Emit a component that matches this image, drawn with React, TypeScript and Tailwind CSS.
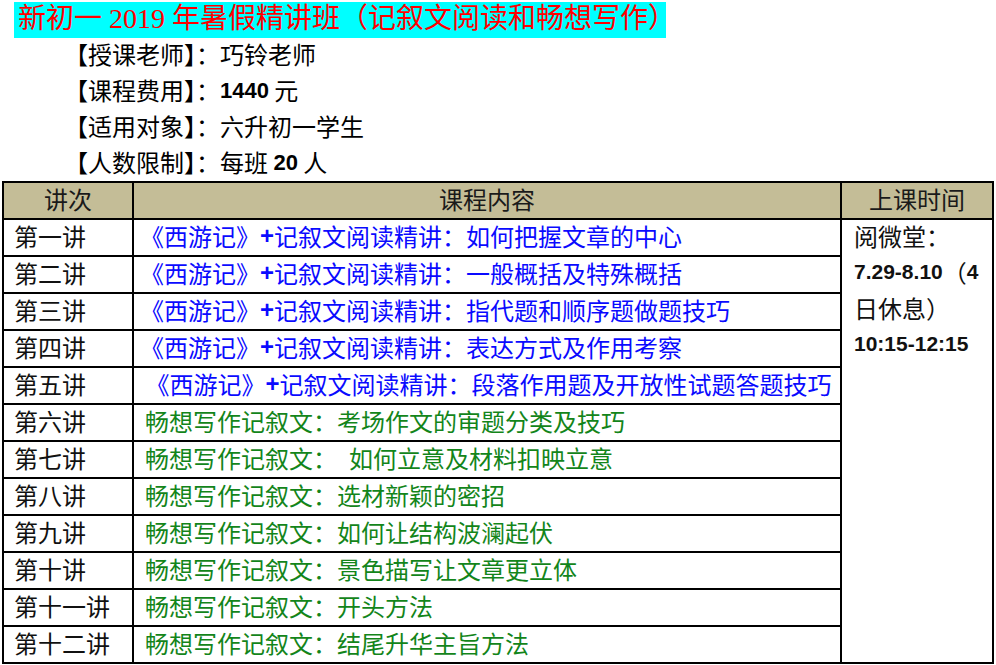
import { FC } from "react";

const cjk = { fontFamily: '"Noto Sans CJK SC", sans-serif' };
const num = { fontFamily: '"Liberation Sans", "Noto Sans CJK SC", sans-serif' };

interface Lesson {
  name: string;
  text: string;
  color: string;
}

const lessons: Lesson[] = [
  { name: "第一讲", text: "《西游记》+记叙文阅读精讲：如何把握文章的中心", color: "blue" },
  { name: "第二讲", text: "《西游记》+记叙文阅读精讲：一般概括及特殊概括", color: "blue" },
  { name: "第三讲", text: "《西游记》+记叙文阅读精讲：指代题和顺序题做题技巧", color: "blue" },
  { name: "第四讲", text: "《西游记》+记叙文阅读精讲：表达方式及作用考察", color: "blue" },
  { name: "第五讲", text: " 《西游记》+记叙文阅读精讲：段落作用题及开放性试题答题技巧", color: "blue" },
  { name: "第六讲", text: "畅想写作记叙文：考场作文的审题分类及技巧", color: "green" },
  { name: "第七讲", text: "畅想写作记叙文：\u3000如何立意及材料扣映立意", color: "green" },
  { name: "第八讲", text: "畅想写作记叙文：选材新颖的密招", color: "green" },
  { name: "第九讲", text: "畅想写作记叙文：如何让结构波澜起伏", color: "green" },
  { name: "第十讲", text: "畅想写作记叙文：景色描写让文章更立体", color: "green" },
  { name: "第十一讲", text: "畅想写作记叙文：开头方法", color: "green" },
  { name: "第十二讲", text: "畅想写作记叙文：结尾升华主旨方法", color: "green" },
];

// 把 "+" 单独加粗，其它照常
const LessonText: FC<{ text: string }> = ({ text }) => {
  const parts = text.split("+");
  if (parts.length < 2) return <>{text}</>;
  return (
    <>
      {parts[0]}
      <span className="font-bold" style={num}>+</span>
      {parts[1]}
    </>
  );
};

const App: FC = () => {
  return (
    <div className="w-[996px] h-[665px] bg-white overflow-hidden" style={cjk}>
      <div className="ml-[14px] mt-[2px] w-[652px] h-[36px] bg-[#00ffff] flex items-center pl-[4px] pb-[2px]">
        <span
          className="text-[#ff0000] text-[28px] leading-none whitespace-pre"
          style={{ fontFamily: '"Liberation Serif", "Noto Sans CJK SC", serif' }}
        >
          新初一 2019 年暑假精讲班（记叙文阅读和畅想写作）
        </span>
      </div>

      <div className="pl-[64px] text-[24px] text-black h-[143px]">
        <div className="h-[36px] flex items-center pb-[4px] whitespace-pre">【授课老师】：巧铃老师</div>
        <div className="h-[36px] flex items-center pb-[4px] whitespace-pre">
          【课程费用】：<span className="font-bold text-[22px]" style={num}>1440</span> 元
        </div>
        <div className="h-[36px] flex items-center pb-[4px] whitespace-pre">【适用对象】：六升初一学生</div>
        <div className="h-[36px] flex items-center pb-[4px] whitespace-pre">
          【人数限制】：每班 <span className="font-bold text-[22px]" style={num}>20</span> 人
        </div>
      </div>

      <div className="ml-[2px] w-[992px] grid grid-cols-[128px_706px_150px] grid-rows-[repeat(13,35px)] gap-[2px] p-[2px] bg-black">
        <div className="bg-[#c4bd97] flex items-center justify-center pb-[3px] text-[24px] text-[#1a1a1a]">讲次</div>
        <div className="bg-[#c4bd97] flex items-center justify-center pb-[3px] text-[24px] text-[#1a1a1a]">课程内容</div>
        <div className="bg-[#c4bd97] flex items-center justify-center pb-[3px] text-[24px] text-[#1a1a1a]">上课时间</div>

        {lessons.map((l, i) => (
          <div key={l.name} className="contents">
            <div className="bg-white flex items-center pl-[10px] pb-[3px] text-[24px] text-[#111]">{l.name}</div>
            <div
              className={`bg-white flex items-center pb-[3px] text-[24px] whitespace-pre ${
                l.color === "blue" ? "pl-[6px] text-[#0a0aff]" : "pl-[11px] text-[#13851a]"
              }`}
            >
              <LessonText text={l.text} />
            </div>
            {i === 0 && (
              <div className="bg-white row-span-12 col-start-3 row-start-2 pl-[12px] text-[24px] text-[#111]">
                <div className="h-[36px] flex items-center pb-[4px]">阅微堂：</div>
                <div className="h-[36px] flex items-center pb-[4px] whitespace-pre">
                  <span className="font-bold text-[21px]" style={num}>7.29-8.10</span>（<span className="font-bold text-[21px]" style={num}>4</span>
                </div>
                <div className="h-[36px] flex items-center pb-[4px]">日休息）</div>
                <div className="h-[36px] flex items-center pb-[4px] font-bold text-[21px]" style={num}>10:15-12:15</div>
              </div>
            )}
          </div>
        ))}
      </div>
    </div>
  );
};

export default App;
